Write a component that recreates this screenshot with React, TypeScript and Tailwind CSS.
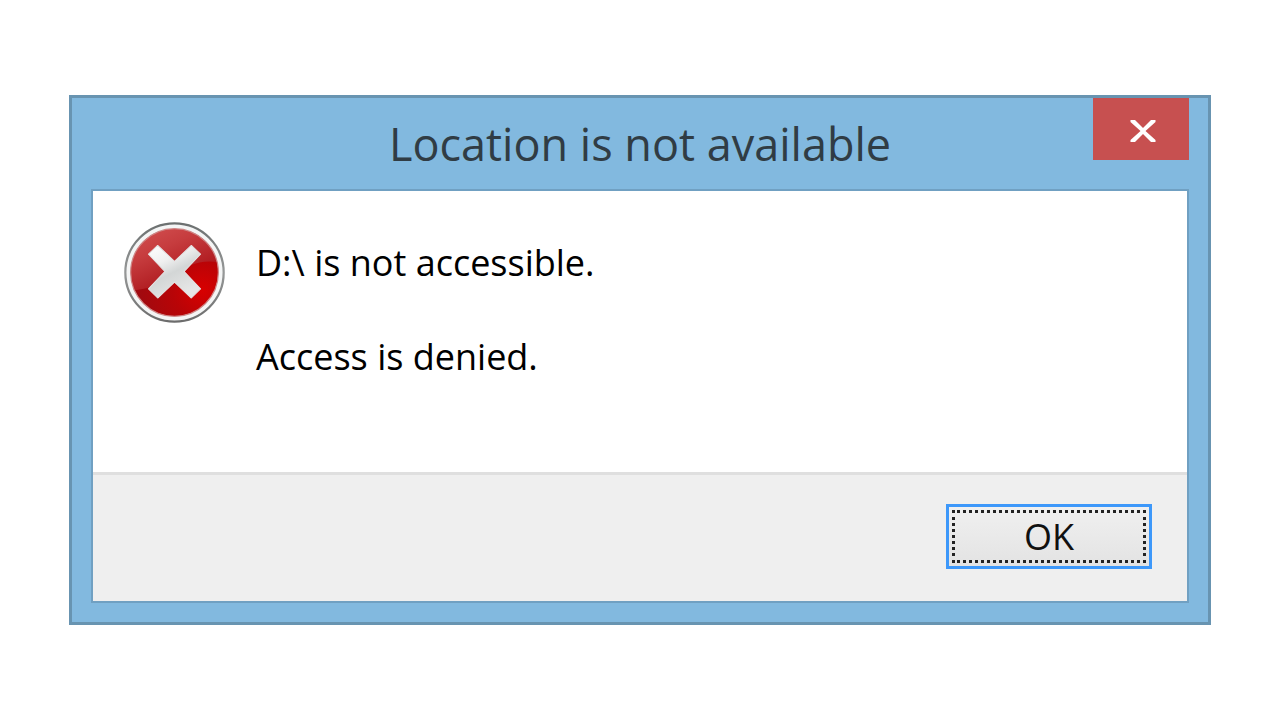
function ErrorIcon() {
  return (
    <svg viewBox="0 0 100 100" className="size-[102px] shrink-0" aria-hidden="true">
      <defs>
        <linearGradient id="rim" x1="0" y1="0" x2="0" y2="1">
          <stop offset="0" stopColor="#6c7070" />
          <stop offset="0.5" stopColor="#969898" />
          <stop offset="1" stopColor="#6c6c6c" />
        </linearGradient>
        <radialGradient id="base" cx="0.82" cy="0.7" r="0.75">
          <stop offset="0" stopColor="#d80000" />
          <stop offset="0.45" stopColor="#b80407" />
          <stop offset="1" stopColor="#9f0a10" />
        </radialGradient>
        <linearGradient id="gloss" x1="0.1" y1="0" x2="0.7" y2="0.9">
          <stop offset="0" stopColor="#d65656" />
          <stop offset="0.45" stopColor="#c63c3e" />
          <stop offset="1" stopColor="#a81016" />
        </linearGradient>
        <linearGradient id="cross" x1="0" y1="0" x2="0.5" y2="1">
          <stop offset="0" stopColor="#fff" />
          <stop offset="0.35" stopColor="#f0f0f0" />
          <stop offset="0.6" stopColor="#d3d6d6" />
          <stop offset="1" stopColor="#e6e6e6" />
        </linearGradient>
        <clipPath id="disc">
          <circle cx="50.500" cy="50.500" r="43" />
        </clipPath>
      </defs>
      <circle cx="50.500" cy="50.500" r="48.2" fill="#f4f5f5" stroke="url(#rim)" strokeWidth="2.2" />
      <circle cx="50.500" cy="50.500" r="43" fill="url(#base)" />
      <path d="M0 0H100V42C80 36 64 42 49 53C35 63 22 69 0 68Z" fill="url(#gloss)" clipPath="url(#disc)" />
      <circle cx="50.500" cy="50.500" r="43" fill="none" stroke="#cf8686" strokeWidth="1.2" />
      <path
        d="M34 24L50.500 39.5L67 24L76 32.5L60 49.500L76 66.5L67 75.500L50.500 60L34 75.500L25 66.5L41 49.500L25 32.5Z"
        fill="url(#cross)"
        stroke="#e4e4e4"
        strokeWidth="1"
        strokeLinejoin="round"
      />
    </svg>
  );
}

export default function App() {
  return (
    <main className="flex min-h-screen items-center bg-white px-[69px] font-['Open_Sans','Noto_Sans',sans-serif]">
      <section
        role="dialog"
        aria-labelledby="dialog-title"
        className="w-full border-3 border-[#6894b1] bg-[#82b9df] px-[19px] pb-[19px]"
      >
        <header className="grid h-[91px] grid-cols-[96px_1fr_96px] items-start">
          <h1
            id="dialog-title"
            className="col-start-2 self-center text-center text-[45px] leading-[60px] text-[#303c44] whitespace-nowrap"
          >
            Location is not available
          </h1>
          <button
            type="button"
            aria-label="Close"
            className="flex h-[62px] items-center justify-center bg-[#c75050]"
          >
            <svg viewBox="0 0 26 24" className="mt-1 ml-1 h-6 w-[26px]" aria-hidden="true">
              <path d="M0.500 1H5L13 9L21 1H25.500V3L15.500 12L25.500 21V23H21L13 15L5 23H0.500V21L10.500 12L0.500 3Z" fill="#fff" />
            </svg>
          </button>
        </header>

        <div className="border-2 border-[#70a0c2] bg-white">
          <div className="flex h-[281px] gap-[31px] pt-[30px] pl-[30px]">
            <ErrorIcon />
            <div className="pt-[18px] text-[36px] leading-[47px] text-black">
              <p>D:\ is not accessible.</p>
              <p className="pt-[47px]">Access is denied.</p>
            </div>
          </div>
          <footer className="flex h-[129px] items-start justify-end border-t-3 border-[#dfdfdf] bg-[#efefef] pt-[29px] pr-[35px]">
            <button
              type="button"
              className="h-[65px] w-[206px] border-3 border-[#3d98fa] bg-linear-to-b from-[#f0f0f0] to-[#e3e3e3] p-[3px] text-[36px] text-[#111]"
            >
              <span className="flex h-full items-center justify-center border-3 border-dotted border-[#222]">
                OK
              </span>
            </button>
          </footer>
        </div>
      </section>
    </main>
  );
}
